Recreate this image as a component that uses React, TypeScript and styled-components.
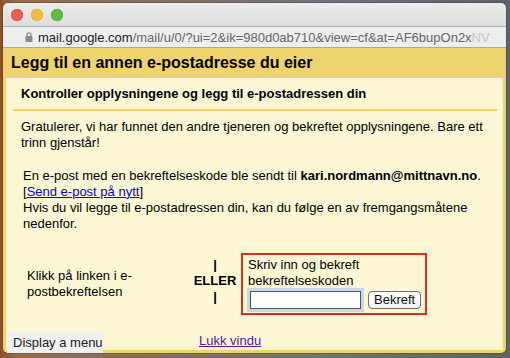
import React from "react";
import styled, { createGlobalStyle } from "styled-components";

const GlobalStyle = createGlobalStyle`
  html, body {
    margin: 0;
    padding: 0;
  }
  body {
    width: 510px;
    height: 358px;
    overflow: hidden;
    font-family: "Liberation Sans", Arial, sans-serif;
  }
`;

const Desktop = styled.div`
  width: 510px;
  height: 358px;
  box-sizing: border-box;
  padding: 3px 4px 5px 3px;
  background: linear-gradient(90deg, #8a5128 0%, #9a6a45 3%, #70747c 60%, #5d636d 100%);
`;

const Window = styled.div`
  position: relative;
  height: 100%;
  display: flex;
  flex-direction: column;
  border-radius: 5px;
  overflow: hidden;
  box-shadow: 0 0 0 1px rgba(0, 0, 0, 0.15);
`;

const TitleBar = styled.div`
  flex-shrink: 0;
  height: 23px;
  display: flex;
  align-items: center;
  gap: 8px;
  padding-left: 8px;
  background: linear-gradient(#ececec, #dcdcdc);
`;

const Light = styled.span<{ $c: string; $b: string }>`
  width: 12px;
  height: 12px;
  border-radius: 50%;
  background: ${(p) => p.$c};
  box-shadow: inset 0 0 0 0.5px ${(p) => p.$b};
`;

const AddressBar = styled.div`
  flex-shrink: 0;
  height: 20px;
  display: flex;
  align-items: center;
  gap: 5px;
  padding-left: 22px;
  background: #eeeeee;
  border-top: 1px solid #b1b1b1;
  border-bottom: 1px solid #a8a8a8;
  white-space: nowrap;
  overflow: hidden;
  font-size: 13px;
  color: #666;
`;

const Host = styled.span`
  color: #1d1d1d;
`;

const Fade = styled.span`
  color: #c4c4c4;
`;

const Page = styled.div`
  flex: 1;
  min-height: 0;
  display: flex;
  flex-direction: column;
  background: #eed46c;
  padding: 0 3px 3px 3px;
`;

const Header = styled.h1`
  flex-shrink: 0;
  margin: 0;
  height: 30px;
  line-height: 30px;
  padding-left: 5px;
  font-size: 16px;
  font-weight: bold;
  color: #000;
`;

const Body = styled.div`
  flex: 1;
  min-height: 0;
  background: #fdf7d6;
  display: flex;
  flex-direction: column;
  font-size: 13px;
  line-height: 16px;
  color: #000;
`;

const SubHeader = styled.div`
  margin: 0 6px 0 7px;
  padding: 8px 0 7px 8px;
  border-bottom: 2px solid #eed46c;
  font-size: 13px;
  font-weight: bold;
`;

const Para = styled.p<{ $indent?: number; $gap?: number }>`
  margin: ${(p) => p.$gap ?? 8}px 0 0 0;
  padding-left: ${(p) => 15 + (p.$indent ?? 0)}px;
  padding-right: 14px;
  line-height: 16.3px;
`;

const Link = styled.a<{ $visited?: boolean }>`
  color: ${(p) => (p.$visited ? "#551a8b" : "#0000ee")};
  text-decoration: underline;
  cursor: pointer;
`;

const ChoiceRow = styled.div`
  display: flex;
  align-items: center;
  margin-top: 20px;
  padding-left: 21px;
`;

const LeftCell = styled.div`
  width: 164px;
`;

const OrCell = styled.div`
  width: 48px;
  display: flex;
  flex-direction: column;
  align-items: center;
  font-weight: bold;
  margin-top: -6px;
`;

const CodeBox = styled.div`
  width: 177px;
  height: 56px;
  border: 2px solid #d8321f;
  padding: 2px 0 0 5px;
  box-sizing: content-box;
  margin-left: 2px;
`;

const CodeRow = styled.div`
  display: flex;
  align-items: center;
  gap: 7px;
  margin-top: 2px;
`;

const CodeInput = styled.input`
  width: 105px;
  height: 14px;
  padding: 1px 2px;
  border: 1px solid #555;
  background: #fff;
  box-shadow: 0 0 0 3px #c7d7ec;
  outline: none;
  margin-left: 2px;
  font-family: inherit;
`;

const ConfirmButton = styled.button`
  height: 18px;
  padding: 0 5px;
  border: 1px solid #707070;
  border-radius: 4px;
  background: linear-gradient(#ffffff, #f2f2f2);
  font-family: inherit;
  font-size: 13px;
  color: #111;
  line-height: 16px;
`;

const Footer = styled.div`
  margin-top: 18px;
  padding-left: 193px;
  font-size: 13px;
`;

const Tooltip = styled.div`
  position: absolute;
  left: 4px;
  bottom: 0;
  width: 96px;
  height: 21px;
  box-sizing: border-box;
  padding-left: 6px;
  background: #f0f0f0;
  font-size: 13px;
  line-height: 21px;
  color: #222;
`;

const LockIcon = () => (
  <svg width="8" height="10" viewBox="0 0 8 10">
    <path d="M2 4V2.8a2 2 0 0 1 4 0V4" fill="none" stroke="#8a8a8a" strokeWidth="1.2" />
    <rect x="0.5" y="4" width="7" height="6" rx="0.8" fill="#8a8a8a" />
  </svg>
);

export default function App() {
  return (
    <>
      <GlobalStyle />
      <Desktop>
        <Window>
          <TitleBar>
            <Light $c="#ee5c54" $b="#d4443c" />
            <Light $c="#f2bd3a" $b="#d6a12a" />
            <Light $c="#5fbb3f" $b="#4a9e30" />
          </TitleBar>
          <AddressBar>
            <LockIcon />
            <span>
              <Host>mail.google.com</Host>/mail/u/0/?ui=2&amp;ik=980d0ab710&amp;view=cf&amp;at=AF6bupOn2x
              <Fade>NV</Fade>
            </span>
          </AddressBar>
          <Page>
            <Header>Legg til en annen e-postadresse du eier</Header>
            <Body>
              <SubHeader>Kontroller opplysningene og legg til e-postadressen din</SubHeader>
              <Para>
                Gratulerer, vi har funnet den andre tjeneren og bekreftet opplysningene. Bare ett trinn
                gjenstår!
              </Para>
              <Para $indent={2} $gap={16}>
                En e-post med en bekreftelseskode ble sendt til <b>kari.nordmann@mittnavn.no</b>.
                <br />[<Link>Send e-post på nytt</Link>]
                <br />
                Hvis du vil legge til e-postadressen din, kan du følge en av fremgangsmåtene nedenfor.
              </Para>
              <ChoiceRow>
                <LeftCell>
                  Klikk på linken i e-
                  <br />
                  postbekreftelsen
                </LeftCell>
                <OrCell>
                  <span>|</span>
                  <span>ELLER</span>
                  <span>|</span>
                </OrCell>
                <CodeBox>
                  Skriv inn og bekreft
                  <br />
                  bekreftelseskoden
                  <CodeRow>
                    <CodeInput type="text" />
                    <ConfirmButton>Bekreft</ConfirmButton>
                  </CodeRow>
                </CodeBox>
              </ChoiceRow>
              <Footer>
                <Link $visited>Lukk vindu</Link>
              </Footer>
            </Body>
          </Page>
          <Tooltip>Display a menu</Tooltip>
        </Window>
      </Desktop>
    </>
  );
}
